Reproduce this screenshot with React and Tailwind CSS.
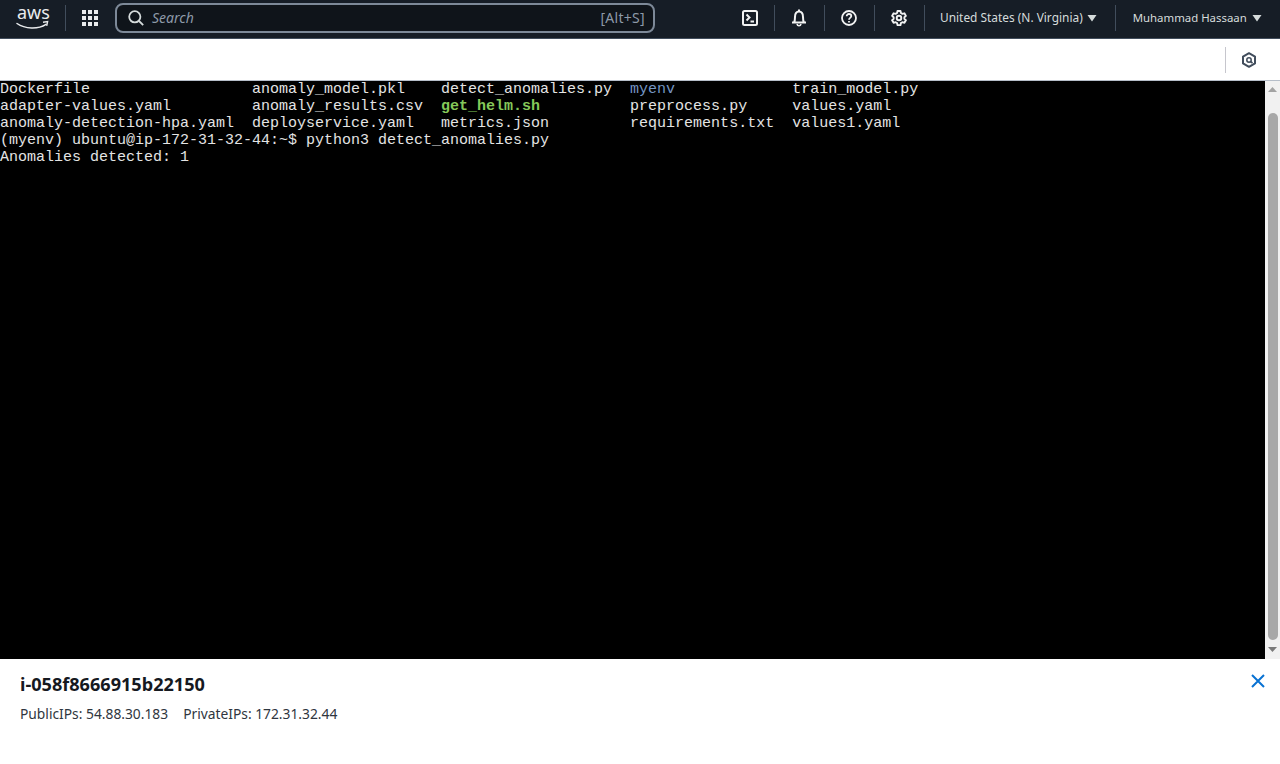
const listing = [
  [
    ["Dockerfile", 28],
    ["anomaly_model.pkl", 21],
    ["detect_anomalies.py", 21],
    ["myenv", 18, "text-[#7596c4]"],
    ["train_model.py", 0],
  ],
  [
    ["adapter-values.yaml", 28],
    ["anomaly_results.csv", 21],
    ["get_helm.sh", 21, "text-[#85c85a] font-bold"],
    ["preprocess.py", 18],
    ["values.yaml", 0],
  ],
  [
    ["anomaly-detection-hpa.yaml", 28],
    ["deployservice.yaml", 21],
    ["metrics.json", 21],
    ["requirements.txt", 18],
    ["values1.yaml", 0],
  ],
];

function Sep() {
  return <div className="w-px h-[26px] bg-[#414d5c]" />;
}

function IconCell({ children }) {
  return <div className="w-[49px] pr-px flex justify-center items-center">{children}</div>;
}

function Caret({ gap }) {
  return (
    <svg width="10" height="8" viewBox="0 0 10 8" className={gap}>
      <path d="M0.5 1h9L5 7.5z" fill="#d5dbdb" />
    </svg>
  );
}

function Header() {
  return (
    <header className="h-[39px] shrink-0 bg-[#161d26] border-b border-[#414d5c] pb-[2px] flex items-center text-[#d5dbdb] font-['Noto_Sans',sans-serif]">
      <div className="w-[65px] flex justify-center">
        <svg width="40" height="36" viewBox="0 0 40 36">
          <text x="4" y="19" fontSize="18" fill="#e9ebed" fontFamily="Noto Sans, sans-serif">aws</text>
          <path d="M4 23.500c8 5.500 21 6 29 .8" fill="none" stroke="#e9ebed" strokeWidth="1.500" strokeLinecap="round" />
          <path d="M30 22.200l4.600-.6-.9 4.300" fill="none" stroke="#e9ebed" strokeWidth="1.400" />
        </svg>
      </div>
      <Sep />
      <div className="w-[49px] pr-[2px] flex justify-center">
        <div className="grid grid-cols-3 gap-[2px]">
          {Array.from({ length: 9 }).map((_, i) => (
            <div key={i} className="w-[4px] h-[4px] bg-[#e9ebed]" />
          ))}
        </div>
      </div>
      <div className="w-[540px] h-[30px] rounded-lg border-2 border-[#7d8998] bg-[#0f141a] flex items-center justify-between pl-[11px] pr-[8px]">
        <div className="flex items-center gap-[8px]">
          <svg width="16" height="16" viewBox="0 0 16 16" fill="none" stroke="#d5dbdb" strokeWidth="1.800">
            <circle cx="6.800" cy="6.800" r="5.600" />
            <path d="M11 11l4.200 4.200" />
          </svg>
          <span className="italic text-sm text-[#8d99a8]">Search</span>
        </div>
        <span className="text-sm tracking-[0.3px] text-[#8d99a8]">[Alt+S]</span>
      </div>
      <div className="ml-[70px] flex items-center">
        <div className="w-[49px] flex justify-center items-center">
          <svg width="16" height="16" viewBox="0 0 16 16" fill="none" stroke="#f2f3f3" strokeWidth="2">
            <rect x="1" y="1" width="14" height="14" rx="1.500" />
            <path d="M4.500 4.500L7.500 7.500 4.500 10.500M8.500 11.500h3.500" />
          </svg>
        </div>
        <Sep />
        <IconCell>
          <svg width="16" height="18" viewBox="0 0 16 18" fill="none" stroke="#f2f3f3" strokeWidth="2">
            <path d="M1 13.500h14M3 13.500c1-1.500 1-3 1-5.500C4 4.500 5.500 2.500 8 2.500s4 2 4 5.500c0 2.500 0 4 1 5.500" />
            <path d="M8 .5v2" />
            <path d="M6 15c.3 1.200 1 1.800 2 1.800s1.700-.6 2-1.800" strokeWidth="1.600" />
          </svg>
        </IconCell>
        <Sep />
        <IconCell>
          <svg width="16" height="16" viewBox="0 0 16 16" fill="none" stroke="#f2f3f3" strokeWidth="1.800">
            <circle cx="8" cy="8" r="7" />
            <path d="M5.700 6.200c0-1.300 1-2.200 2.300-2.200s2.300.9 2.300 2.100c0 1.800-2.300 1.800-2.300 3.600" />
            <path d="M8 11v1.500" strokeWidth="1.800" />
          </svg>
        </IconCell>
        <Sep />
        <IconCell>
          <svg width="16" height="16" viewBox="0 0 16 16" fill="none" stroke="#f2f3f3" strokeWidth="1.900">
            <circle cx="8" cy="8" r="2.300" />
            <path d="M6.500 1h3l.4 2 1.500.9 2-.6 1.500 2.600-1.500 1.300v1.700l1.500 1.300-1.500 2.600-2-.6-1.500.9-.4 2h-3l-.4-2-1.500-.9-2 .6L1.100 10.200l1.500-1.300V7.200L1.100 5.900l1.500-2.600 2 .6 1.500-.9z" strokeLinejoin="round" />
          </svg>
        </IconCell>
        <Sep />
      </div>
      <div className="ml-[15px] flex items-center text-[11.9px]">
        <span>United States (N. Virginia)</span>
        <Caret gap="ml-[4px]" />
      </div>
      <div className="ml-[18px]"><Sep /></div>
      <div className="ml-[17px] flex items-center text-[11.4px]">
        <span>Muhammad Hassaan</span>
        <Caret gap="ml-[5px]" />
      </div>
    </header>
  );
}

function Toolbar() {
  return (
    <div className="h-[42px] shrink-0 bg-white border-b border-[#b6bec9] flex items-center justify-end">
      <div className="w-px h-[26px] bg-[#c6c6cd]" />
      <div className="w-[54px] pr-[8px] flex justify-center">
        <svg width="16" height="16" viewBox="0 0 16 16" fill="none" stroke="#414d5c" strokeWidth="2">
          <path d="M8 1.200l6 3.400v6.800l-6 3.400-6-3.400V4.600z" strokeLinejoin="round" />
          <circle cx="8" cy="8" r="2.200" strokeWidth="1.500" />
          <path d="M9.500 9.500l2 1.500" strokeWidth="1.600" />
        </svg>
      </div>
    </div>
  );
}

function Scrollbar() {
  return (
    <div className="w-[15px] shrink-0 bg-[#f1f1f1] flex flex-col items-center">
      <div className="h-[17px] flex items-center justify-center">
        <svg width="9" height="5" viewBox="0 0 9 5"><path d="M4.500 0L9 5H0z" fill="#a3a3a3" /></svg>
      </div>
      <div className="h-[15px]" />
      <div className="w-[10px] flex-1 rounded-[5px] bg-[#a8a8a8]" />
      <div className="h-[19px] flex items-center justify-center">
        <svg width="9" height="5" viewBox="0 0 9 5"><path d="M0 0h9L4.500 5z" fill="#7a7a7a" /></svg>
      </div>
    </div>
  );
}

function Terminal() {
  return (
    <div className="h-[578px] shrink-0 flex">
      <pre className="flex-1 bg-black text-[#e4e4e4] text-[15px] leading-[17px] font-['Liberation_Mono',monospace] overflow-hidden">
        {listing.map((row, i) => (
          <div key={i} className="h-[17px]">
            {row.map(([name, pad, cls], j) => (
              <span key={j} className={cls}>{name.padEnd(pad)}</span>
            ))}
          </div>
        ))}
        <div className="h-[17px]">{"(myenv) ubuntu@ip-172-31-32-44:~$ python3 detect_anomalies.py"}</div>
        <div className="h-[17px]">Anomalies detected: 1</div>
      </pre>
      <Scrollbar />
    </div>
  );
}

function InstanceInfo() {
  return (
    <div className="flex-1 bg-white px-5 pt-[13px] flex justify-between font-['Noto_Sans',sans-serif] text-[#16191f]">
      <div>
        <h1 className="text-[18.1px] leading-[24px] font-bold">i-058f8666915b22150</h1>
        <div className="mt-[8px] flex gap-[15px] text-[13.8px] leading-[20px] text-[#2f3640]">
          <span>PublicIPs: 54.88.30.183</span>
          <span>PrivateIPs: 172.31.32.44</span>
        </div>
      </div>
      <button className="h-[16px] mt-[1px] -mr-[6px]">
        <svg width="16" height="16" viewBox="0 0 16 16" fill="none" stroke="#0972d3" strokeWidth="2">
          <path d="M2 2l12 12M14 2L2 14" />
        </svg>
      </button>
    </div>
  );
}

export default function App() {
  return (
    <div className="h-[764px] w-[1280px] flex flex-col overflow-hidden bg-white">
      <Header />
      <Toolbar />
      <Terminal />
      <InstanceInfo />
    </div>
  );
}
